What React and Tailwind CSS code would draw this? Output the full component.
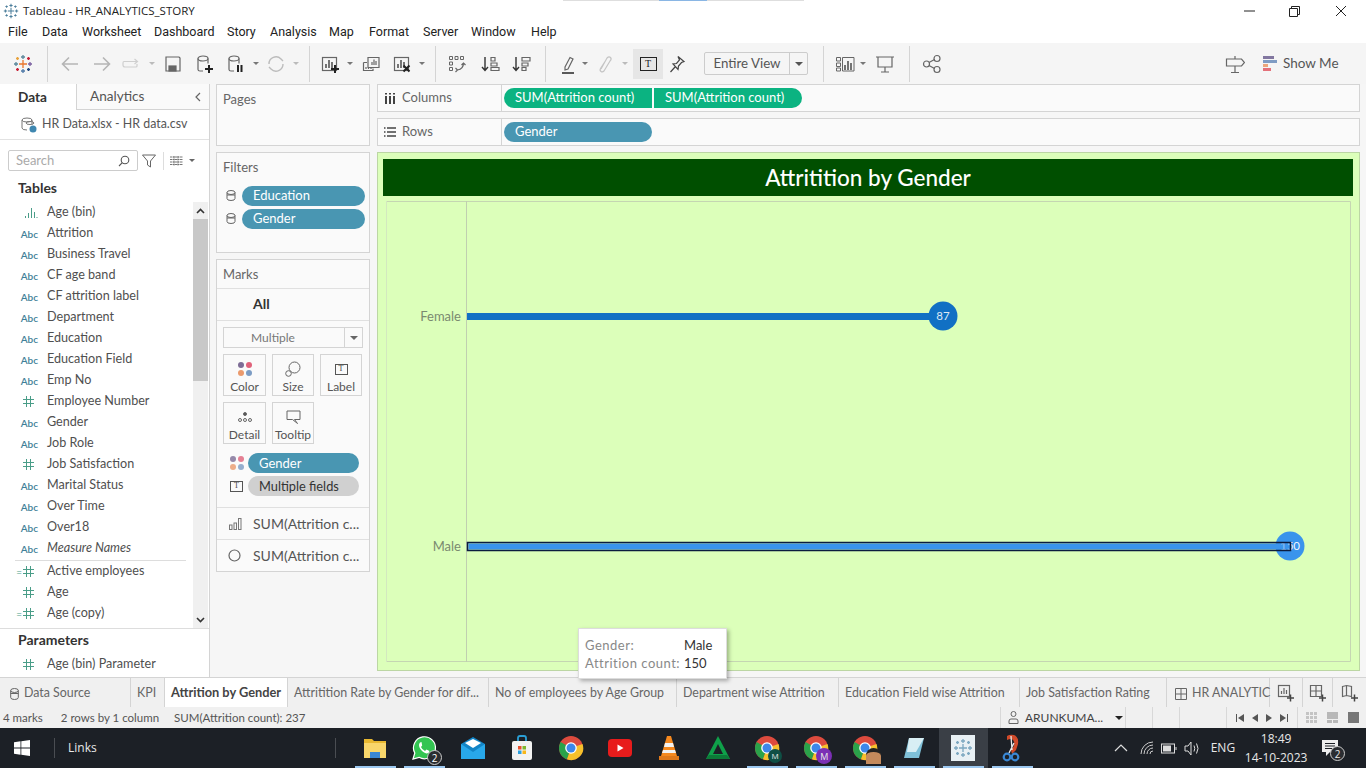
import React from 'react';

const I = ({ w = 20, h = 20, box, children, className = '' }) => (
  <svg width={w} height={h} viewBox={box || `0 0 ${w} ${h}`} fill="none" stroke="#666" strokeWidth="1.2" className={className}>
    {children}
  </svg>
);

const Drop = ({ className = '', color = 'border-t-[#777]' }) => (
  <div className={`w-2 flex justify-center ${className}`}>
    <div className={`w-0 h-0 border-x-[3px] border-x-transparent border-t-[3px] ${color}`} />
  </div>
);

const Sep = ({ className = '' }) => <div className={`w-px h-[36px] bg-[#d4d4d4] ${className}`} />;

const TableauLogo = ({ s = 20, color }) => {
  const c = (x) => color || x;
  return (
    <svg width={s} height={s} viewBox="0 0 20 20" strokeWidth="1.3">
      <path d="M10 6v8M6 10h8" stroke={c('#e8762d')} />
      <path d="M10 1v4M8 3h4" stroke={c('#5b879b')} />
      <path d="M10 15v4M8 17h4" stroke={c('#4e79a7')} />
      <path d="M1 10h4M3 8v4" stroke={c('#59879b')} />
      <path d="M15 10h4M17 8v4" stroke={c('#7a5fa0')} />
      <path d="M4.5 3v3M3 4.5h3" stroke={c('#e8a33d')} />
      <path d="M15.5 3v3M14 4.5h3" stroke={c('#c72035')} />
      <path d="M4.5 14v3M3 15.5h3" stroke={c('#c72035')} />
      <path d="M15.5 14v3M14 15.5h3" stroke={c('#1f457e')} />
    </svg>
  );
};

const BarsIcon = ({ children }) => (
  <I>
    <rect x="2.5" y="3.5" width="14" height="13" />
    <path d="M6 14v-4M9 14V6M12 14V8" strokeWidth="1.6" stroke="#555" />
    {children}
  </I>
);

const Plus = ({ x = 15, y = 16 }) => <path d={`M${x - 4} ${y}h8M${x} ${y - 4}v8`} stroke="#222" strokeWidth="2" />;

const DbIcon = ({ children }) => (
  <I>
    <ellipse cx="8" cy="4.5" rx="5" ry="2.5" />
    <path d="M3 4.5v11q0 1.5 2 1.5h3M13 4.5v5" />
    {children}
  </I>
);

const Toolbar = () => (
  <div className="h-[41px] bg-[#f5f5f5] flex items-center text-[#555]">
    <div className="w-5 ml-[13px]"><TableauLogo s={20} /></div>
    <Sep className="ml-[14px]" />
    <div className="w-5 ml-[12px]">
      <I box="0 0 20 20"><path d="M18 10H3M9 3.5 2.5 10 9 16.5" stroke="#b5b5b5" strokeWidth="1.6" /></I>
    </div>
    <div className="w-5 ml-[12px]">
      <I><path d="M2 10h15M11 3.5l6.5 6.5-6.5 6.5" stroke="#b5b5b5" strokeWidth="1.6" /></I>
    </div>
    <div className="w-5 ml-[9px]">
      <I><path d="M3 7.500h13M13.500 5l3 2.500-3 2.500M16 10v2q0 1-1 1H4q-2 0-2-2V9q0-1.500 1-1.500" stroke="#cfcfcf" /></I>
    </div>
    <Drop className="ml-[7px]" color="border-t-[#bbb]" />
    <div className="w-5 ml-[7px]">
      <I>
        <path d="M3 3h13l1 1v13H3Z" />
        <rect x="6" y="12" width="7" height="5" fill="#666" />
      </I>
    </div>
    <div className="w-5 ml-[12px]"><DbIcon><Plus x={14} y={15} /></DbIcon></div>
    <div className="w-5 ml-[11px]">
      <DbIcon><path d="M12 11v7M15.5 11v7" stroke="#222" strokeWidth="2" /></DbIcon>
    </div>
    <Drop className="ml-[6px]" />
    <div className="w-5 ml-[6px]">
      <I>
        <path d="M3 10a7 7 0 0 1 12-5l2 2M17 10a7 7 0 0 1-12 5l-2-2" stroke="#bcbcbc" strokeWidth="1.4" />
      </I>
    </div>
    <Drop className="ml-[6px]" color="border-t-[#bbb]" />
    <Sep className="ml-[9px]" />
    <div className="w-5 ml-[10px]"><BarsIcon><Plus x={15} y={15} /></BarsIcon></div>
    <Drop className="ml-[6px]" />
    <div className="w-5 ml-[7px]">
      <I>
        <path d="M7 3.5h11v10H7Z" />
        <path d="M11 11V8M13 11V5.5M15 11V7" />
        <path d="M2.5 8.5H6M2.5 8.5v8H12v-2" />
        <path d="M5 15v-2M7.5 15v-1M10 15v-1" />
      </I>
    </div>
    <div className="w-5 ml-[11px]">
      <BarsIcon><path d="M11.5 11.5l6 6M17.5 11.5l-6 6" stroke="#222" strokeWidth="2" /></BarsIcon>
    </div>
    <Drop className="ml-[6px]" />
    <Sep className="ml-[9px]" />
    <div className="w-5 ml-[11px]">
      <I>
        <path d="M2.5 2.5h3v3h-3ZM8 2.5h3v3H8ZM13.5 2.5h3v3h-3ZM2.5 8h3v3h-3ZM2.5 13.5h3v3h-3Z" strokeWidth="1" />
        <path d="M16.5 9q0 6-6 7M8.5 14l2 2-2 2M14.5 11l2-2 2 2" strokeWidth="1.2" />
      </I>
    </div>
    <div className="w-5 ml-[13px]">
      <I>
        <path d="M5 3v13M2 13l3 3.5L8 13" stroke="#333" strokeWidth="1.4" />
        <path d="M11 3.5h4v3.5h-4ZM11 9h6v3h-6ZM11 13.5h8v3h-8Z" />
      </I>
    </div>
    <div className="w-5 ml-[11px]">
      <I>
        <path d="M5 3v13M2 13l3 3.5L8 13" stroke="#333" strokeWidth="1.4" />
        <path d="M11 3.5h8v3.5h-8ZM11 9h6v3h-6ZM11 13.5h4v3h-4Z" />
      </I>
    </div>
    <Sep className="ml-[14px]" />
    <div className="w-5 ml-[12px]">
      <I>
        <path d="M7 13 12 3.5l3 1.5L10 15l-3 1Z" />
        <path d="M4 19h12" stroke="#333" strokeWidth="1.6" />
      </I>
    </div>
    <Drop className="ml-[3px]" />
    <div className="w-5 ml-[6px]">
      <I><path d="M6 15 12 4q2-2 3.500-.5T15 7l-6 10q-1.500 1.500-3 .5t-.5-3L11 6" stroke="#c4c4c4" /></I>
    </div>
    <Drop className="ml-[6px]" color="border-t-[#bbb]" />
    <div className="w-[30px] h-[30px] ml-1 bg-[#e6e6e6] flex items-center justify-center">
      <div className="w-[17px] h-[14px] border border-[#222] flex items-center justify-center text-[10px] leading-none text-[#222] font-['Liberation_Serif',serif]">T</div>
    </div>
    <div className="w-5 ml-1">
      <I><path d="M11 2.500l6 5-2.500 1-3 3.500-.5 3.500L6 10l3.500-.5L12.500 6ZM8 13l-4.500 5" stroke="#444" /></I>
    </div>
    <div className="w-[104px] h-[23px] ml-[17px] flex items-center border border-[#ccc] rounded-[2px] text-[13.3px]">
      <div className="flex-1 text-center">Entire View</div>
      <div className="w-[18px] h-full border-l border-[#ccc] flex items-center justify-center">
        <div className="w-0 h-0 border-x-[4px] border-x-transparent border-t-[4px] border-t-[#555]" />
      </div>
    </div>
    <Sep className="ml-[15px]" />
    <div className="w-5 ml-[11px]">
      <I>
        <path d="M1.500 3.500h4v3.500h-4ZM1.500 9h4v3.500h-4ZM1.500 14h4v3h-4ZM7.500 3.500h11.500v13.500H7.500Z" strokeWidth="1" />
        <path d="M10 16v-5M13 16V7M16 16v-7" strokeWidth="1.8" />
      </I>
    </div>
    <Drop className="ml-1" />
    <div className="w-5 ml-2">
      <I><path d="M1 3h18M3 3v10h14V3M10 13v5M6 18h8" /></I>
    </div>
    <Sep className="ml-[14px]" />
    <div className="w-5 ml-[12px]">
      <I><circle cx="15" cy="4.500" r="3" /><circle cx="15" cy="15.500" r="3" /><circle cx="4.500" cy="10" r="3" /><path d="M7 8.500l5.500-3M7 11.500l5.500 3" /></I>
    </div>
    <div className="w-5 ml-[283px]">
      <I>
        <path d="M1.500 5h15l3 3.500-3 3.500h-15ZM10 2v3M10 12v6.500M6 18.500h8" />
      </I>
    </div>
    <div className="ml-[18px] flex items-center gap-[5px] text-[13.5px]">
      <div className="w-[15px] flex flex-col gap-px">
        <div className="h-[3px] w-[11px] bg-[#8277a0]" />
        <div className="h-[3px] w-[14px] bg-[#7f9cc4]" />
        <div className="h-[3px] w-[5px] bg-[#eba67c]" />
        <div className="h-[3px] w-[8px] bg-[#e4717a]" />
      </div>
      <span>Show Me</span>
    </div>
  </div>
);

const Abc = () => <span className="text-[10px] font-semibold text-[#3f7f98] leading-none">Abc</span>;
const Hash = ({ calc }) => (
  <span className="flex items-center">
    {calc && <span className="text-[10px] text-[#4a9d88] leading-none mr-px">=</span>}
    <svg width="11" height="11" viewBox="0 0 11 11" stroke="#4a9d88" strokeWidth="1">
      <path d="M3.500 0v11M7.500 0v11M0 3.500h11M0 7.500h11" />
    </svg>
  </span>
);
const Bin = () => (
  <svg width="14" height="10" viewBox="0 0 14 10" stroke="#4a9d88" strokeWidth="1">
    <path d="M1.500 10V8M4.500 10V5M7.500 10V0M10.500 10V4M13 10V9" />
  </svg>
);

const fields = [
  ['bin', 'Age (bin)'], ['abc', 'Attrition'], ['abc', 'Business Travel'], ['abc', 'CF age band'],
  ['abc', 'CF attrition label'], ['abc', 'Department'], ['abc', 'Education'], ['abc', 'Education Field'],
  ['abc', 'Emp No'], ['hash', 'Employee Number'], ['abc', 'Gender'], ['abc', 'Job Role'],
  ['hash', 'Job Satisfaction'], ['abc', 'Marital Status'], ['abc', 'Over Time'], ['abc', 'Over18'],
  ['abc', 'Measure Names'],
];
const measures = [['calc', 'Active employees'], ['hash', 'Age'], ['calc', 'Age (copy)']];

const FieldRow = ({ type, name }) => (
  <div className="h-[21px] flex items-center">
    <div className={`w-[47px] flex justify-end ${type === 'hash' || type === 'calc' ? 'pr-[13px]' : 'pr-[9px]'}`}>
      {type === 'abc' && <Abc />}
      {type === 'hash' && <Hash />}
      {type === 'calc' && <Hash calc />}
      {type === 'bin' && <Bin />}
    </div>
    <span className={`text-[12.6px] text-[#4f4f4f] ${name === 'Measure Names' ? 'italic' : ''}`}>{name}</span>
  </div>
);

const DataPane = () => (
  <div className="w-[210px] h-full bg-white border-r border-[#d4d4d4] flex flex-col shrink-0">
    <div className="h-[26px] flex text-[13.6px]">
      <div className="w-[77px] border-r border-[#d4d4d4] font-bold text-[#333] flex items-center pl-[18px]">Data</div>
      <div className="flex-1 border-b border-[#d4d4d4] bg-[#fafafa] flex items-center pl-[13px] text-[#555]">
        <span>Analytics</span>
        <svg width="8" height="10" viewBox="0 0 8 10" className="ml-[50px]" stroke="#666" fill="none" strokeWidth="1.2">
          <path d="M6 1 2 5l4 4" />
        </svg>
      </div>
    </div>
    <div className="h-[30px] border-b border-[#e2e2e2] flex items-center pl-[20px] text-[12.4px] text-[#555]">
      <svg width="18" height="18" viewBox="0 0 18 18" fill="none" stroke="#777" strokeWidth="1">
        <ellipse cx="7" cy="4" rx="5" ry="2" />
        <path d="M2 4v8q0 2 5 2M12 4v4" />
        <ellipse cx="10" cy="7" rx="4" ry="1.500" />
        <circle cx="13" cy="13" r="3.500" fill="#3f87b0" stroke="none" />
      </svg>
      <span className="ml-1">HR Data.xlsx - HR data.csv</span>
    </div>
    <div className="mt-[10px] h-[21px] flex items-center">
      <div className="ml-2 w-[130px] h-[21px] border border-[#ccc] rounded-[2px] flex items-center justify-between px-[7px] text-[13px] text-[#aaa]">
        <span>Search</span>
        <svg width="12" height="12" viewBox="0 0 12 12" fill="none" stroke="#555" strokeWidth="1.100">
          <circle cx="7" cy="5" r="3.800" />
          <path d="M4.300 7.700 1 11" />
        </svg>
      </div>
      <svg width="14" height="14" viewBox="0 0 14 14" fill="none" stroke="#666" strokeWidth="1" className="ml-[4px]">
        <path d="M.5 1h13L8.500 7v6l-3-2V7Z" />
      </svg>
      <div className="w-px h-[18px] bg-[#ddd] ml-[7px]" />
      <svg width="13" height="10" viewBox="0 0 13 10" stroke="#777" className="ml-[6px]">
        <path d="M0 1h13M0 3.500h13M0 6h13M0 8.500h13M4 0v10M8 0v10" strokeDasharray="2 .5" />
      </svg>
      <Drop className="ml-[5px]" color="border-t-[#666]" />
    </div>
    <div className="h-[31px] pl-[18px] pt-[7px] text-[14px] font-bold text-[#333] leading-[20px]">Tables</div>
    <div className="flex h-[426px]">
      <div className="flex-1 min-w-0">
        {fields.map(([type, name]) => <FieldRow key={name} type={type} name={name} />)}
        <div className="h-[2px] ml-[15px] mr-[7px] border-b border-[#ddd]" />
        {measures.map(([type, name]) => <FieldRow key={name} type={type} name={name} />)}
      </div>
      <div className="w-[15px] mr-[1px] bg-[#f0f0f0] flex flex-col items-center">
        <div className="h-[17px] flex items-center">
          <svg width="9" height="6" viewBox="0 0 9 6" fill="none" stroke="#333" strokeWidth="1.600"><path d="M1 5l3.500-3.500L8 5" /></svg>
        </div>
        <div className="w-full h-[162px] bg-[#c8c8c8]" />
        <div className="flex-1" />
        <div className="h-[17px] flex items-center">
          <svg width="9" height="6" viewBox="0 0 9 6" fill="none" stroke="#333" strokeWidth="1.600"><path d="M1 1l3.500 3.500L8 1" /></svg>
        </div>
      </div>
    </div>
    <div className="border-t border-[#ddd] pl-[18px] pt-px text-[14px] font-bold text-[#333] h-[26px] leading-[20px]">Parameters</div>
    <FieldRow type="hash" name="Age (bin) Parameter" />
  </div>
);

const Pill = ({ className = '', children }) => (
  <div className={`h-[20px] rounded-full bg-[#4996b2] text-white text-[13px] flex items-center px-[11px] leading-none ${className}`}>{children}</div>
);

const MarkBtn = ({ label, children }) => (
  <div className="h-[42px] border border-[#d4d4d4] flex flex-col items-center text-[12px] text-[#555] leading-none">
    <div className="h-[25px] flex items-center justify-center pt-[3px]">{children}</div>
    <span className="mt-[1px]">{label}</span>
  </div>
);

const TBox = () => (
  <div className="w-[13px] h-[11px] border border-[#555] text-[8px] leading-none text-[#444] flex items-center justify-center font-['Liberation_Serif',serif]">T</div>
);

const Dots = ({ faded }) => (
  <div className={`grid grid-cols-2 gap-[2px] w-[14px] ${faded ? 'opacity-80' : ''}`}>
    <div className="w-[6px] h-[6px] rounded-full bg-[#7d6d96]" />
    <div className="w-[6px] h-[6px] rounded-full bg-[#e0627a]" />
    <div className="w-[6px] h-[6px] rounded-full bg-[#eb9a6d]" />
    <div className="w-[6px] h-[6px] rounded-full bg-[#7c9cc4]" />
  </div>
);

const MiddlePane = () => (
  <div className="w-[154px] ml-[6px] shrink-0 flex flex-col gap-[6px] text-[13px] text-[#666]">
    <div className="h-[62px] border border-[#d4d4d4] bg-[#fafafa] pl-[6px] pt-[5px]">Pages</div>
    <div className="h-[101px] border border-[#d4d4d4] bg-[#fafafa] pt-[5px]">
      <div className="pl-[6px] mb-[8px]">Filters</div>
      {['Education', 'Gender'].map((f) => (
        <div key={f} className="flex items-center mb-[3px]">
          <svg width="10" height="11" viewBox="0 0 10 11" fill="none" stroke="#666" className="ml-[9px] mr-[6px]">
            <ellipse cx="5" cy="2.500" rx="4" ry="2" />
            <path d="M1 2.500v6q0 2 4 2t4-2v-6M1 5h8" />
          </svg>
          <Pill className="w-[123px]">{f}</Pill>
        </div>
      ))}
    </div>
    <div className="h-[313px] border border-[#d4d4d4] bg-[#fafafa]">
      <div className="h-[29px] border-b border-[#e0e0e0] pl-[6px] pt-[5px]">Marks</div>
      <div className="h-[32px] border-b border-[#e0e0e0] pl-[36px] pb-[2px] font-bold text-[#333] text-[14px] flex items-center">All</div>
      <div className="mx-[6px] mt-[6px] h-[21px] border border-[#d4d4d4] flex items-center text-[12px] text-[#777]">
        <div className="flex-1 text-center pr-[22px]">Multiple</div>
        <div className="w-[18px] h-full border-l border-[#d4d4d4] flex items-center justify-center">
          <div className="w-0 h-0 border-x-[4px] border-x-transparent border-t-[4px] border-t-[#666]" />
        </div>
      </div>
      <div className="mx-[6px] mt-[6px] grid grid-cols-[43px_42px_42px] gap-x-[6px] gap-y-[6px]">
        <MarkBtn label="Color"><Dots /></MarkBtn>
        <MarkBtn label="Size">
          <svg width="16" height="16" viewBox="0 0 16 16" fill="none" stroke="#666">
            <circle cx="9.500" cy="6.500" r="5.500" />
            <circle cx="3.500" cy="12.500" r="2.800" fill="#fafafa" />
          </svg>
        </MarkBtn>
        <MarkBtn label="Label"><TBox /></MarkBtn>
        <MarkBtn label="Detail">
          <svg width="14" height="10" viewBox="0 0 14 10" fill="none" stroke="#666">
            <circle cx="7" cy="2" r="1.500" fill="#555" />
            <circle cx="2" cy="8" r="1.500" /><circle cx="7" cy="8" r="1.500" /><circle cx="12" cy="8" r="1.500" />
          </svg>
        </MarkBtn>
        <MarkBtn label="Tooltip">
          <svg width="15" height="15" viewBox="0 0 15 15" fill="none" stroke="#666">
            <path d="M1 1h13v8.500H8.500l3 4-5-4H1Z" />
          </svg>
        </MarkBtn>
      </div>
      <div className="flex items-center mt-[9px] ml-[13px]">
        <Dots faded />
        <Pill className="w-[111px] ml-[4px]">Gender</Pill>
      </div>
      <div className="flex items-center mt-[3px] ml-[13px] h-[20px]">
        <TBox />
        <div className="ml-[5px] w-[111px] h-[20px] rounded-full bg-[#d0d0d0] text-[#333] text-[12.8px] flex items-center px-[11px] leading-none">Multiple fields</div>
      </div>
      <div className="mt-[11px] h-[32px] border-t border-[#e0e0e0] flex items-center text-[#555] text-[14px]">
        <svg width="13" height="12" viewBox="0 0 13 12" fill="none" stroke="#777" className="ml-[12px] mr-[11px]">
          <rect x=".5" y="7" width="2.500" height="4.500" /><rect x="5" y="5" width="2.500" height="6.500" /><rect x="9.500" y=".5" width="2.500" height="11" />
        </svg>
        <span>SUM(Attrition c...</span>
      </div>
      <div className="h-[32px] border-t border-[#e0e0e0] flex items-center text-[#555] text-[14px]">
        <svg width="13" height="13" viewBox="0 0 13 13" fill="none" stroke="#666" strokeWidth="1.200" className="ml-[11px] mr-[12px]">
          <circle cx="6.500" cy="6.500" r="5.500" />
        </svg>
        <span>SUM(Attrition c...</span>
      </div>
    </div>
  </div>
);

const Shelf = ({ label, icon, pills }) => (
  <div className="h-[28px] border border-[#d4d4d4] bg-[#fafafa] flex text-[13px] text-[#666]">
    <div className="w-[124px] border-r border-[#d4d4d4] flex items-center pl-[6px] gap-[6px]">
      {icon}
      <span>{label}</span>
    </div>
    <div className="flex items-center pl-[2px] gap-[2px]">
      {pills.map((p, i) => (
        <div key={i} className={`w-[148px] h-[20px] text-white text-[13px] flex items-center pl-[11px] pb-px leading-none ${p.cls}`}>{p.text}</div>
      ))}
    </div>
  </div>
);

const Chart = () => (
  <svg viewBox="0 0 965 461" width="965" height="461" className="ml-[3px] mt-[5px] block">
    <path d="M0 .5h964.500V460.500H0" fill="none" stroke="#c5d6b2" />
    <path d="M.5 0v461" stroke="#d3e8bf" />
    <path d="M80.500 0v461" stroke="#c0cfb0" />
    <text x="75" y="120" textAnchor="end" fontSize="13" fill="#7a8a70" fontFamily="Lato, sans-serif">Female</text>
    <text x="75" y="350" textAnchor="end" fontSize="13" fill="#7a8a70" fontFamily="Lato, sans-serif">Male</text>
    <rect x="81" y="112" width="477" height="7" fill="#1170c4" />
    <circle cx="557" cy="115" r="14.500" fill="#1170c4" />
    <text x="557" y="119" textAnchor="middle" fontSize="11.500" fill="#dfe9f4" fontFamily="Lato, sans-serif">87</text>
    <circle cx="904" cy="345" r="14.500" fill="#3a94ec" />
    <text x="904" y="349" textAnchor="middle" fontSize="11.500" fill="#f0f6fc" fontFamily="Lato, sans-serif">150</text>
    <rect x="81.500" y="341.500" width="823" height="8" fill="#3a94ec" fillOpacity="0.55" stroke="#0b1c3f" strokeWidth="1.500" />
    <rect x="83" y="343" width="810" height="5" fill="#3a94ec" />
  </svg>
);

const MainArea = () => (
  <div className="w-[983px] ml-[7px] shrink-0 flex flex-col gap-[6px]">
    <Shelf
      label="Columns"
      icon={
        <svg width="12" height="11" viewBox="0 0 12 11" stroke="#444" strokeWidth="2">
          <path d="M2 3v8M6 3v8M10 3v8" />
          <path d="M2 0v1.500M6 0v1.500M10 0v1.500" />
        </svg>
      }
      pills={[
        { text: 'SUM(Attrition count)', cls: 'bg-[#0bb381] rounded-l-full' },
        { text: 'SUM(Attrition count)', cls: 'bg-[#0bb381] rounded-r-full' },
      ]}
    />
    <Shelf
      label="Rows"
      icon={
        <svg width="12" height="10" viewBox="0 0 12 10" stroke="#444" strokeWidth="1.500">
          <path d="M3 1h9M3 5h9M3 9h9M0 1h1.500M0 5h1.500M0 9h1.500" />
        </svg>
      }
      pills={[{ text: 'Gender', cls: 'bg-[#4996b2] rounded-full' }]}
    />
    <div className="h-[519px] border border-[#bcd6a4] bg-[#dcffba] pt-[6px] pl-[5px]">
      <div className="w-[970px] h-[37px] bg-[#004f00] flex items-center justify-center text-white text-[22.5px] font-medium font-['Lato',sans-serif]">
        Attritition by Gender
      </div>
      <Chart />
    </div>
  </div>
);

const tabs = [
  ['w-[131px]', 'Data Source'], ['w-[34px]', 'KPI'], ['w-[123px]', 'Attrition by Gender'],
  ['w-[201px]', 'Attritition Rate by Gender for dif...'], ['w-[188px]', 'No of employees by Age Group'],
  ['w-[162px]', 'Department wise Attrition'], ['w-[181px]', 'Education Field wise Attrition'],
  ['w-[147px]', 'Job Satisfaction Rating'],
];

const TabStrip = () => (
  <div className="h-[30px] bg-[#f0f0f0] border-t border-[#d4d4d4] flex text-[12.4px] text-[#666]">
    {tabs.map(([w, name]) => {
      const active = name === 'Attrition by Gender';
      return (
        <div key={name} className={`${w} shrink-0 border-r border-[#d4d4d4] flex items-center whitespace-nowrap overflow-hidden ${active ? 'bg-white font-bold text-[12.8px] text-[#444] justify-center' : 'pl-[6px] pt-[2px]'}`}>
          {name === 'Data Source' && (
            <svg width="9" height="12" viewBox="0 0 9 12" fill="none" stroke="#666" className="ml-[4px] mr-[5px]">
              <ellipse cx="4.500" cy="2.500" rx="3.800" ry="2" />
              <path d="M.7 2.500v7q0 2 3.800 2t3.800-2v-7M.7 5.500h7.600" />
            </svg>
          )}
          {name}
        </div>
      );
    })}
    <div className="w-[103px] shrink-0 border-r border-[#d4d4d4] flex items-center pl-[8px] pt-[2px] whitespace-nowrap">
      <svg width="12" height="12" viewBox="0 0 12 12" fill="none" stroke="#666" className="mr-[5px] shrink-0">
        <path d="M.5.500h11v11H.5ZM6 .5v11M.5 6h11" />
      </svg>
      HR ANALYTIC
    </div>
    <div className="w-[33px] border-r border-[#d4d4d4] flex items-center justify-center">
      <I w={18} h={18}><rect x="1.500" y="1.500" width="11" height="11" /><path d="M4.500 10V7M7 10V4M9.500 10V6" /><path d="M10 14h7M13.500 10.500v7" stroke="#444" strokeWidth="1.500" /></I>
    </div>
    <div className="w-[30px] border-r border-[#d4d4d4] flex items-center justify-center">
      <I w={18} h={18}><path d="M1.500 1.500h11v11h-11ZM7 1.500v11M1.500 7h11" /><path d="M10 14h7M13.500 10.500v7" stroke="#444" strokeWidth="1.500" /></I>
    </div>
    <div className="w-[33px] flex items-center justify-center">
      <I w={18} h={18}><path d="M1.500 2.500l4-1 5 1v10l-5-1-4 1ZM5.500 1.500v10" /><path d="M10 14h7M13.500 10.500v7" stroke="#444" strokeWidth="1.500" /></I>
    </div>
  </div>
);

const StatusBar = () => (
  <div className="h-[21px] bg-[#f0f0f0] flex items-center text-[11.5px] text-[#555] relative">
    <span className="ml-[3px]">4 marks</span>
    <span className="ml-[18px]">2 rows by 1 column</span>
    <span className="ml-[15px]">SUM(Attrition count): 237</span>
    <div className="flex h-full ml-auto text-[12px]">
      <div className="w-[126px] border-x border-[#d8d8d8] flex items-center pl-[7px] text-[#444]">
        <svg width="11" height="13" viewBox="0 0 11 13" fill="none" stroke="#666" className="mr-[6px]">
          <circle cx="5.500" cy="3" r="2.500" />
          <path d="M1 12.500V10q0-2 2-2h5q2 0 2 2v2.500Z" />
        </svg>
        <span>ARUNKUMA...</span>
        <div className="ml-[12px] w-0 h-0 border-x-[4px] border-x-transparent border-t-[4px] border-t-[#222]" />
      </div>
      <div className="w-[27px] border-r border-[#d8d8d8]" />
      <div className="w-[27px] border-r border-[#d8d8d8]" />
      <div className="w-[47px] border-r border-[#d8d8d8]" />
      <div className="w-[71px] border-r border-[#d8d8d8] flex items-center justify-center gap-[8px]">
        <svg width="8" height="8" viewBox="0 0 8 8" fill="#555"><path d="M0 0h1v8H0ZM8 0v8L2 4Z" /></svg>
        <svg width="6" height="8" viewBox="0 0 6 8" fill="#555"><path d="M6 0v8L0 4Z" /></svg>
        <svg width="6" height="8" viewBox="0 0 6 8" fill="#555"><path d="M0 0v8l6-4Z" /></svg>
        <svg width="8" height="8" viewBox="0 0 8 8" fill="#555"><path d="M7 0h1v8H7ZM0 0v8l6-4Z" /></svg>
      </div>
      <div className="w-[68px] flex items-center justify-center gap-[10px]">
        <svg width="11" height="11" viewBox="0 0 11 11" fill="#c4c4c4"><path d="M0 0h3v3H0ZM4 0h3v3H4ZM8 0h3v3H8ZM0 4h3v3H0ZM4 4h3v3H4ZM8 4h3v3H8ZM0 8h3v3H0ZM4 8h3v3H4ZM8 8h3v3H8Z" /></svg>
        <svg width="11" height="11" viewBox="0 0 11 11" fill="#b8b8b8"><path d="M0 0h11v7H0ZM0 8h5v3H0ZM6 8h5v3H6Z" /></svg>
        <div className="w-[11px] h-[11px] bg-[#777]" />
      </div>
    </div>
  </div>
);

const Chrome = ({ badge }) => (
  <div className="relative w-[26px] h-[26px]">
    <svg width="26" height="26" viewBox="0 0 26 26">
      <circle cx="13" cy="13" r="12" fill="#dd4b3e" />
      <path d="M13 13 2.600 7A12 12 0 0 0 9 24.300Z" fill="#2aa24a" />
      <path d="M13 13 24.500 9A12 12 0 0 1 9 24.300Z" fill="#f6c02c" />
      <circle cx="13" cy="13" r="5.800" fill="#fff" />
      <circle cx="13" cy="13" r="4.500" fill="#3d87ea" />
    </svg>
    {badge}
  </div>
);

const RunLine = () => <div className="absolute left-[4px] right-[4px] bottom-0 h-[2px] bg-[#9cc8f0]" />;

const Task = ({ w = 'w-[49px]', on, active, children }) => (
  <div className={`${w} h-full relative flex items-center justify-center shrink-0 ${active ? 'bg-[#3a3f46]' : ''}`}>
    {children}
    {on && <RunLine />}
  </div>
);

const Taskbar = () => (
  <div className="h-[40px] bg-[#1c2026] flex items-center text-[#e8e8e8] font-['Open_Sans',sans-serif]">
    <svg width="16" height="16" viewBox="0 0 16 16" fill="#fff" className="ml-[14px]">
      <path d="M0 2.200 6.500 1.300v6.300H0ZM7.300 1.200 16 0v7.600H7.300ZM0 8.400h6.500v6.300L0 13.800ZM7.300 8.400H16V16l-8.700-1.200Z" />
    </svg>
    <div className="w-px h-[20px] bg-[#4a4d52] ml-[24px]" />
    <span className="ml-[13px] text-[12px]">Links</span>
    <div className="w-px h-[20px] bg-[#4a4d52] ml-[238px]" />
    <div className="flex h-full ml-[15px]">
      <Task on>
        <svg width="24" height="22" viewBox="0 0 24 22">
          <path d="M1 2h8l2 2h12v4H1Z" fill="#e8b830" />
          <path d="M1 6h22v15H1Z" fill="#f8d66b" />
          <path d="M7 15h10v6H7Z" fill="#3a87d4" />
        </svg>
      </Task>
      <Task on>
        <div className="relative">
          <svg width="26" height="26" viewBox="0 0 26 26">
            <path d="M2 24l1.800-6A11 11 0 1 1 8 22.300Z" fill="#33c552" stroke="#fff" strokeWidth="1.200" />
            <path d="M9 7.500q-2 2 0 6 2.500 4 6.500 5 2.500 0 3-2.500l-3-1.500-1.500 1.500q-3-1.500-4-4l1.200-1.500L10.500 7Z" fill="#fff" />
          </svg>
          <div className="absolute -right-[5px] -bottom-[4px] w-[15px] h-[15px] rounded-full bg-[#2a2d31] border border-[#ccc] flex items-center justify-center text-[10px] leading-none text-white">2</div>
        </div>
      </Task>
      <Task>
        <svg width="26" height="22" viewBox="0 0 26 22">
          <path d="M1 7 13 0l12 7v15H1Z" fill="#1285c7" />
          <path d="M1 7l12 8 12-8v15H1Z" fill="#28a8ea" />
          <path d="M5 6l8-4 8 4-8 5Z" fill="#fff" />
        </svg>
      </Task>
      <Task>
        <svg width="22" height="26" viewBox="0 0 22 26">
          <path d="M7 6V3q0-2 2-2h4q2 0 2 2v3" fill="none" stroke="#2a9fd6" strokeWidth="1.800" />
          <rect x="1" y="6" width="20" height="19" rx="2" fill="#f2f2f2" />
          <path d="M7 11h3.500v3.500H7Z" fill="#e8502e" /><path d="M11.500 11H15v3.500h-3.500Z" fill="#7db92e" />
          <path d="M7 15.500h3.500V19H7Z" fill="#2aa0e0" /><path d="M11.500 15.500H15V19h-3.500Z" fill="#f7b619" />
        </svg>
      </Task>
      <Task><Chrome /></Task>
      <Task>
        <svg width="26" height="20" viewBox="0 0 26 20">
          <rect x="1" y="1" width="24" height="18" rx="4" fill="#e81c1c" />
          <path d="M10.500 6.500v7l6-3.500Z" fill="#fff" />
        </svg>
      </Task>
      <Task>
        <svg width="24" height="28" viewBox="0 0 24 28">
          <path d="M10 2h4l6 20H4Z" fill="#f5891f" />
          <path d="M8 9h8l1 4H7ZM6 16h12l1 3H5Z" fill="#f2f2f2" />
          <path d="M2 22h20v4H2Z" fill="#e0791a" />
        </svg>
      </Task>
      <Task>
        <svg width="26" height="26" viewBox="0 0 26 26">
          <path d="M13 1 25 24H1Z" fill="#0fa14a" />
          <path d="M13 9l5 10H8Z" fill="#1c2026" />
          <path d="M1 24h24l-3-4H4Z" fill="#0c7a38" />
        </svg>
      </Task>
      <Task on>
        <Chrome badge={<div className="absolute -right-[2px] -bottom-[2px] w-[14px] h-[14px] rounded-full bg-[#0f4f45] flex items-center justify-center text-[8px] leading-none">M</div>} />
      </Task>
      <Task on>
        <Chrome badge={<div className="absolute -right-[3px] -bottom-[3px] w-[16px] h-[16px] rounded-full bg-[#7b2fb5] flex items-center justify-center text-[9px] leading-none">M</div>} />
      </Task>
      <Task on>
        <Chrome badge={<div className="absolute -right-[3px] -bottom-[3px] w-[15px] h-[16px] rounded-t-full bg-[#c48a5c] border-t-4 border-[#222]" />} />
      </Task>
      <Task on>
        <svg width="24" height="24" viewBox="0 0 24 24">
          <path d="M7 2h15l-5 20H2Z" fill="#7fc0d8" />
          <path d="M7 2h15l-8 14H5Z" fill="#d8eef4" />
        </svg>
      </Task>
      <Task active on>
        <div className="w-[24px] h-[26px] bg-[#e8f0f4] flex items-center justify-center">
          <TableauLogo s={20} color="#7ba7c0" />
        </div>
      </Task>
      <Task on>
        <svg width="22" height="30" viewBox="0 0 22 30">
          <path d="M6 3q3-2 7-1 5 2 4 9l-2 6-4 4-1-4 3-4q1-6-3-7-2 0-4 1Z" fill="#d04a2a" />
          <path d="M10 3l1 14M13 10l-5 10" stroke="#e8e8e8" strokeWidth="1.300" />
          <circle cx="6" cy="24" r="3.300" fill="none" stroke="#3a87d4" strokeWidth="2.200" />
          <circle cx="14" cy="24" r="3.300" fill="none" stroke="#3a87d4" strokeWidth="2.200" />
        </svg>
      </Task>
    </div>
    <svg width="14" height="8" viewBox="0 0 14 8" fill="none" stroke="#ddd" strokeWidth="1.200" className="ml-[77px]">
      <path d="M1 7l6-6 6 6" />
    </svg>
    <svg width="15" height="14" viewBox="0 0 15 14" fill="none" stroke="#ccc" className="ml-[12px]">
      <path d="M1 13A12 12 0 0 1 13 1M4 13a9 9 0 0 1 9-9M7 13a6 6 0 0 1 6-6M10 13a3 3 0 0 1 3-3" />
    </svg>
    <svg width="16" height="11" viewBox="0 0 16 11" fill="none" stroke="#ddd" className="ml-[6px]">
      <rect x=".5" y="1" width="13" height="9" />
      <rect x="2.500" y="3" width="7" height="5" fill="#ddd" />
      <path d="M15 4v3" />
    </svg>
    <svg width="16" height="15" viewBox="0 0 16 15" fill="none" stroke="#ddd" className="ml-[7px]">
      <path d="M1 5h3l3-4v13l-3-4H1ZM10 4.500q1.500 3 0 6M12.500 2.500q3 5 0 10" />
    </svg>
    <span className="ml-[11px] text-[12px]">ENG</span>
    <div className="ml-[9px] w-[64px] text-center text-[12px] leading-[19px]">
      <div>18:49</div>
      <div>14-10-2023</div>
    </div>
    <div className="relative ml-[13px]">
      <svg width="18" height="18" viewBox="0 0 18 18" fill="#eee">
        <path d="M1 1h16v12H9l-4 4v-4H1Z" />
        <path d="M4 4.500h10M4 7h10M4 9.500h7" stroke="#1c2026" strokeWidth="1" />
      </svg>
      <div className="absolute -right-[6px] -bottom-[4px] w-[15px] h-[15px] rounded-full bg-[#2a2d31] border border-[#ccc] flex items-center justify-center text-[10px] leading-none">2</div>
    </div>
  </div>
);

export default function App() {
  return (
    <div className="relative w-[1366px] h-[768px] overflow-hidden bg-white font-['Lato',sans-serif]">
      {/* window thumbnail strip at the very top edge */}
      <div className="absolute top-0 left-[563px] w-[241px] h-px bg-[#dedede]">
        <div className="ml-[96px] w-[48px] h-px bg-[#8ab6e4]" />
      </div>

      <div className="h-[22px] flex items-center text-[11.5px] text-[#222] font-['Open_Sans',sans-serif]">
        <div className="ml-[3px]"><TableauLogo s={16} color="#4d7f9c" /></div>
        <span className="ml-[4px]">Tableau - HR_ANALYTICS_STORY</span>
        <div className="ml-auto flex items-center">
          <svg width="11" height="2" viewBox="0 0 11 2" stroke="#222"><path d="M0 1h11" /></svg>
          <svg width="11" height="11" viewBox="0 0 11 11" fill="none" stroke="#222" className="ml-[34px]">
            <path d="M.5 2.500h8v8h-8ZM2.500 2.500V.5h8v8h-2" />
          </svg>
          <svg width="12" height="12" viewBox="0 0 12 12" fill="none" stroke="#222" className="ml-[35px] mr-[19px]">
            <path d="M1 1l10 10M11 1 1 11" />
          </svg>
        </div>
      </div>

      <div className="h-[21px] flex items-center text-[12.5px] text-[#222] font-['Roboto',sans-serif]">
        <span className="ml-[8px] w-[34px]">File</span>
        <span className="w-[40px]">Data</span>
        <span className="w-[72px]">Worksheet</span>
        <span className="w-[73px]">Dashboard</span>
        <span className="w-[43px]">Story</span>
        <span className="w-[59px]">Analysis</span>
        <span className="w-[40px]">Map</span>
        <span className="w-[54px]">Format</span>
        <span className="w-[48px]">Server</span>
        <span className="w-[60px]">Window</span>
        <span>Help</span>
      </div>

      <Toolbar />

      <div className="h-[593px] bg-[#f6f6f6] flex">
        <DataPane />
        <MiddlePane />
        <MainArea />
      </div>

      <TabStrip />
      <StatusBar />
      <Taskbar />

      {/* hover tooltip over the chart */}
      <div className="absolute left-[578px] top-[628px] w-[149px] h-[51px] bg-white border border-[#ddd] shadow-[2px_2px_4px_rgba(0,0,0,0.3)] text-[13px] pl-[6px] pt-[7px] leading-[18px]">
        <div className="flex"><span className="w-[99px] text-[#888] tracking-[0.5px]">Gender:</span><span className="text-[#333]">Male</span></div>
        <div className="flex"><span className="w-[99px] text-[#888] tracking-[0.5px]">Attrition count:</span><span className="text-[#333]">150</span></div>
      </div>
    </div>
  );
}
